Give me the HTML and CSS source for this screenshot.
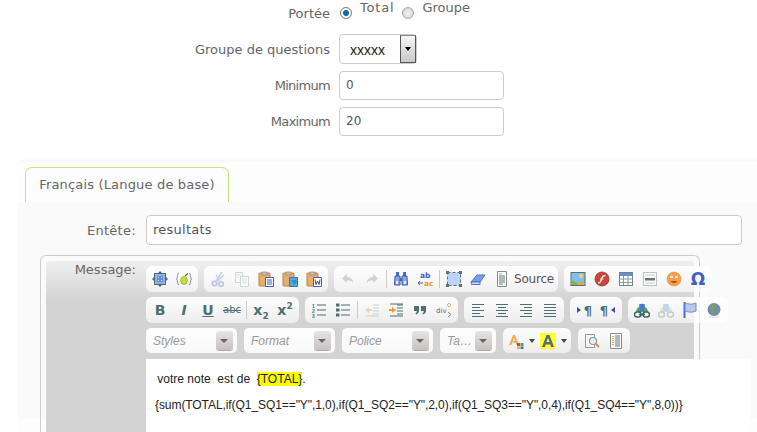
FILE: index.html
```html
<!DOCTYPE html>
<html lang="fr">
<head>
<meta charset="utf-8">
<title>Résultats</title>
<link rel="stylesheet" href="styles.css">
</head>
<body>
<div class="form">
  <div class="row row-radio">
    <label class="lbl">Portée</label>
    <div class="radios">
      <span class="radio on"></span><span class="rtext total">Total</span>
      <span class="radio"></span><span class="rtext">Groupe</span>
    </div>
  </div>
  <div class="row row-select">
    <label class="lbl">Groupe de questions</label>
    <div class="select"><span class="seltext">xxxxx</span><span class="selbtn"></span></div>
  </div>
  <div class="row"><label class="lbl narrow">Minimum</label><div class="input short">0</div></div>
  <div class="row"><label class="lbl narrow">Maximum</label><div class="input short">20</div></div>
</div>

<div class="panel">
  <div class="tabs"><div class="tab">Français (Langue de base)</div></div>
  <div class="body">
    <div class="head-row"><label class="lbl2">Entête:</label><div class="input wide">resultats</div></div>
    <div class="msgbox">
      <div class="msginner">
        <label class="lbl3">Message:</label>
        <div class="editor">
          <div class="tb">
            <div class="g">
              <span class="b"><svg viewBox="0 0 16 16"><path d="M8 0l2 2H6zM8 16l2-2H6zM0 8l2-2v4zM16 8l-2-2v4z" fill="#4f6f6f"/><rect x="2.500" y="2.500" width="11" height="11" fill="#8fb2ea" stroke="#4f6f6f"/><rect x="5" y="5" width="6" height="6" fill="#6a8cd8"/><path d="M6 6h1v1H6zM9 6h1v1H9zM6 9h1v1H6zM9 9h1v1H9z" fill="#cfe0fa"/></svg></span>
              <span class="b"><svg viewBox="0 0 16 16"><path d="M3 2C1 2 2 7 0.500 8 2 9 1 14 3 14M13 2c2 0 1 5 2.500 6-1.500 1-.5 6-2.500 6" fill="none" stroke="#888"/><ellipse cx="8" cy="9.500" rx="3.500" ry="4" fill="#c4dc3c" stroke="#8aa626" stroke-width=".6"/><path d="M9 5l3-2.500" stroke="#5a7a1a" stroke-width="1.200"/></svg></span>
            </div>
            <div class="g">
              <span class="b"><svg viewBox="0 0 16 16"><path d="M12 1L6 10M14 4L7 10" stroke="#c2cce6" stroke-width="1.500" fill="none"/><circle cx="4.500" cy="12.500" r="2.300" fill="none" stroke="#b4c2e6" stroke-width="1.500"/><circle cx="11" cy="13" r="2.300" fill="none" stroke="#b4c2e6" stroke-width="1.500"/><path d="M6 4l4 7" stroke="#d0d4de" stroke-width="1.500"/></svg></span>
              <span class="b"><svg viewBox="0 0 16 16"><path d="M1.500 1.500h7v10h-7z" fill="#f8f8f8" stroke="#cfd4d4"/><path d="M6.500 5.500h8v10h-8z" fill="#fcfcfc" stroke="#cfd4d4"/><path d="M8 8h5M8 10h5M8 12h5M3 4h4M3 6h2" stroke="#dadddd"/></svg></span>
              <span class="b"><svg viewBox="0 0 16 16"><rect x="1" y="2" width="11" height="13" rx="1" fill="#e8ad68" stroke="#b5824a"/><rect x="4" y="1" width="5" height="3" fill="#c9c2b4" stroke="#8d7a5c" stroke-width=".6"/><path d="M7.500 6.500h8v9h-8z" fill="#fff" stroke="#3b5fc4"/><path d="M9 9h5M9 11h5M9 13h5" stroke="#3b5fc4"/></svg></span>
              <span class="b"><svg viewBox="0 0 16 16"><rect x="1" y="2" width="11" height="13" rx="1" fill="#e8ad68" stroke="#b5824a"/><rect x="4" y="1" width="5" height="3" fill="#c9c2b4" stroke="#8d7a5c" stroke-width=".6"/><path d="M7.500 6.500h8v9h-8z" fill="#54a7d8" stroke="#3b76a8"/><path d="M9 9h5l1 3-3 2" fill="#2f8fd0"/></svg></span>
              <span class="b"><svg viewBox="0 0 16 16"><rect x="1" y="2" width="11" height="13" rx="1" fill="#e8ad68" stroke="#b5824a"/><rect x="4" y="1" width="5" height="3" fill="#c9c2b4" stroke="#8d7a5c" stroke-width=".6"/><path d="M7.500 6.500h8v9h-8z" fill="#fff" stroke="#3b5fc4"/><path d="M9 8.500l1 5 1.500-3.500 1.500 3.500 1-5" fill="none" stroke="#3d4d7c"/></svg></span>
            </div>
            <div class="g">
              <span class="b"><svg viewBox="0 0 16 16"><path d="M7 3L2 7.500 7 12V9.500c3 0 5 .5 6 3 .5-4-2-6-6-6.500z" fill="#c9d5d5"/></svg></span>
              <span class="b"><svg viewBox="0 0 16 16"><path d="M9 3l5 4.500L9 12V9.500c-3 0-5 .5-6 3-.5-4 2-6 6-6.500z" fill="#c9d5d5"/></svg></span>
              <span class="sep"></span>
              <span class="b"><svg viewBox="0 0 16 16"><path d="M3 1h3v4H3zM10 1h3v4h-3z" fill="#4668c8"/><path d="M2 5h5v9H1.500zM9 5h5l.5 9H9z" fill="#8ea4e4" stroke="#3d5cb8"/><path d="M7 7h2v3H7z" fill="#4f6f6f"/><path d="M3 10h2v3H3zM11 10h2v3h-2z" fill="#e6edf8"/></svg></span>
              <span class="b"><svg viewBox="0 0 16 16"><text x="3" y="7" class="svgt" fill="#3b5fc4">ab</text><text x="7" y="15" class="svgt" fill="#e59a32">ac</text><path d="M6 12H1l2-2M1 12l2 2" fill="none" stroke="#3b5fc4"/></svg></span>
              <span class="sep"></span>
              <span class="b"><svg viewBox="0 0 16 16"><rect x="1.500" y="1.500" width="13" height="13" fill="#bcd2f6" stroke="#5d7474" stroke-dasharray="3 2"/><path d="M0 0h3v3H0zM13 0h3v3h-3zM0 13h3v3H0zM13 13h3v3h-3z" fill="#5d7474"/></svg></span>
              <span class="b"><svg viewBox="0 0 16 16"><path d="M1 11l6-7h8l-5 7z" fill="#7d9be6" stroke="#5270c4"/><path d="M1 11h9v2.500H1.500z" fill="#cfdcf6" stroke="#5270c4"/></svg></span>
              <span class="b src"><svg viewBox="0 0 16 16"><path d="M3.500 .5h9v15h-9z" fill="#fff" stroke="#7f9090"/><path d="M5 3h3" stroke="#e59a32"/><path d="M5 5h6M5 7h6M5 9h6M5 11h6M5 13h4" stroke="#5d7474"/></svg><span class="srct">Source</span></span>
            </div>
            <div class="g">
              <span class="b"><svg viewBox="0 0 16 16"><rect x="1" y="1.500" width="14" height="13" fill="#7ec2ea" stroke="#5a6f6f"/><path d="M1.500 14V9l4 2 5 3z" fill="#7bb84a"/><path d="M7 14l3-4 4 2v2z" fill="#e9a345"/><circle cx="11" cy="5" r="2" fill="#f6d95a"/></svg></span>
              <span class="b"><svg viewBox="0 0 16 16"><circle cx="8" cy="8" r="7" fill="#c9473a" stroke="#9a3025" stroke-width=".8"/><path d="M4 12c3 0 3-2 4-5 .5-1.500 1.500-2.500 3.500-2.500" fill="none" stroke="#f3e4dc" stroke-width="1.500"/><path d="M6 8h3.500" stroke="#f3e4dc"/></svg></span>
              <span class="b"><svg viewBox="0 0 16 16"><rect x="1.500" y="1.500" width="13" height="13" fill="#fff" stroke="#6f8484"/><path d="M1.500 2h13v3h-13z" fill="#6a8cd8"/><path d="M1.500 8h13M1.500 11.500h13M5.500 5v9M10 5v9" stroke="#8a9c9c"/></svg></span>
              <span class="b"><svg viewBox="0 0 16 16"><rect x="1.500" y="1.500" width="13" height="13" fill="#fff" stroke="#bcc2c2"/><path d="M3 4h10M3 12h10" stroke="#c4c8c8"/><path d="M3 7h10v2.500H3z" fill="#5f7676"/></svg></span>
              <span class="b"><svg viewBox="0 0 16 16"><circle cx="8" cy="8" r="7" fill="#f2a24e" stroke="#e58a30" stroke-width=".6"/><path d="M4 6h3M9 6h3" stroke="#fff" stroke-width="1.300"/><path d="M4.500 10c1.500 2.500 5.500 2.500 7 0z" fill="#c23f2c"/></svg></span>
              <span class="b"><span class="omega">Ω</span></span>
            </div>
          </div>

          <div class="tb">
            <div class="g">
              <span class="b"><span class="tx tb-b">B</span></span>
              <span class="b"><span class="tx tb-i">I</span></span>
              <span class="b"><span class="tx tb-u">U</span></span>
              <span class="b"><span class="tx tb-s">abc</span></span>
              <span class="sep"></span>
              <span class="b"><span class="tx tb-x">x<sub>2</sub></span></span>
              <span class="b"><span class="tx tb-x">x<sup>2</sup></span></span>
            </div>
            <div class="g">
              <span class="b"><svg viewBox="0 0 16 16"><text x="1" y="5.500" class="svgn">1</text><text x="1" y="10.500" class="svgn">2</text><text x="1" y="15.500" class="svgn">3</text><path d="M6 3h9M6 8h9M6 13h9" stroke="#4f6f6f" stroke-width="1.200"/></svg></span>
              <span class="b"><svg viewBox="0 0 16 16"><path d="M1 1.500h3.500v3H1zM1 6.500h3.500v3H1zM1 11.500h3.500v3H1z" fill="#4f6f6f"/><path d="M6 3h9M6 8h9M6 13h9" stroke="#4f6f6f" stroke-width="1.200"/></svg></span>
              <span class="sep"></span>
              <span class="b"><svg viewBox="0 0 16 16"><path d="M1 8l4-3v2h3v2H5v2z" fill="#f3d2a8"/><path d="M9 3h6M9 6h6M9 9h6M9 12h6M2 14h13" stroke="#c9d5d5"/></svg></span>
              <span class="b"><svg viewBox="0 0 16 16"><path d="M8 8L4 5v2H1v2h3v2z" fill="#ef9a34"/><path d="M9 3h6M9 6h6M9 9h6M9 12h6M2 14h13M2 2h13" stroke="#4f6f6f"/></svg></span>
              <span class="b"><svg viewBox="0 0 16 16"><path d="M2 4h5v4.500C7 11 5.500 12 4 12.500L3.500 11c1-.3 1.300-1 1.300-2H2zM9 4h5v4.500c0 2.500-1.500 3.500-3 4l-.5-1.500c1-.3 1.300-1 1.300-2H9z" fill="#4f6f6f"/></svg></span>
              <span class="b"><svg viewBox="0 0 16 16"><text x="0" y="11" class="svgd">div</text><path d="M13 1l2 2-2 2-2-2z" fill="none" stroke="#ef9a34" stroke-width=".8"/><path d="M12 10l3 2.500-3 2.500" fill="none" stroke="#666" stroke-width=".8"/></svg></span>
            </div>
            <div class="g">
              <span class="b"><svg viewBox="0 0 16 16"><path d="M2 2.500h12M2 5.500h8M2 8.500h12M2 11.500h8M2 14.500h12" stroke="#4f6f6f" stroke-width="1.100"/></svg></span>
              <span class="b"><svg viewBox="0 0 16 16"><path d="M2 2.500h12M4 5.500h8M2 8.500h12M4 11.500h8M2 14.500h12" stroke="#4f6f6f" stroke-width="1.100"/></svg></span>
              <span class="b"><svg viewBox="0 0 16 16"><path d="M2 2.500h12M6 5.500h8M2 8.500h12M6 11.500h8M2 14.500h12" stroke="#4f6f6f" stroke-width="1.100"/></svg></span>
              <span class="b"><svg viewBox="0 0 16 16"><path d="M2 2.500h12M2 5.500h12M2 8.500h12M2 11.500h12M2 14.500h12" stroke="#4f6f6f" stroke-width="1.100"/></svg></span>
            </div>
            <div class="g">
              <span class="b"><svg class="mini" viewBox="0 0 8 16"><path d="M1 5l4 3-4 3z" fill="#3f4fa8"/></svg><span class="pil">¶</span></span>
              <span class="b"><span class="pil">¶</span><svg class="mini" viewBox="0 0 8 16"><path d="M7 5L3 8l4 3z" fill="#3f4fa8"/></svg></span>
            </div>
            <div class="g">
              <span class="b"><svg viewBox="0 0 16 16"><path d="M2 10a6 6 0 0 1 12 0z" fill="#46b058"/><path d="M5 2.500a6 6 0 0 1 6 0l-1 7H6z" fill="#4a7ad8"/><rect x="0.500" y="10" width="6.500" height="5" rx="2.400" fill="none" stroke="#44605f" stroke-width="1.500"/><rect x="9" y="10" width="6.500" height="5" rx="2.400" fill="none" stroke="#44605f" stroke-width="1.500"/><path d="M5 12.500h6" stroke="#44605f" stroke-width="1.500"/></svg></span>
              <span class="b"><svg viewBox="0 0 16 16"><path d="M2 10a6 6 0 0 1 12 0z" fill="#cfe4d4"/><path d="M5 2.500a6 6 0 0 1 6 0l-1 7H6z" fill="#c0d2ee"/><rect x="0.500" y="10" width="6" height="5" rx="2.400" fill="none" stroke="#c2cbcb" stroke-width="1.500"/><rect x="9.500" y="10" width="6" height="5" rx="2.400" fill="none" stroke="#c2cbcb" stroke-width="1.500"/></svg></span>
              <span class="b"><svg viewBox="0 0 16 16"><path d="M2.500 0v16" stroke="#4c6cd0" stroke-width="2"/><path d="M3 1c4 1 6 2 11 0v8c-5 2-7 1-11 0z" fill="#b9c8e6" stroke="#6d88d4"/></svg></span>
              <span class="b"><svg viewBox="0 0 16 16"><circle cx="8" cy="7.500" r="6.500" fill="#6d8cb4"/><path d="M4 4l4-2 2 3-2 3 1 3-3 1-1-4zM11 8l2-1-1 4z" fill="#8a9c60"/><path d="M3 15h10" stroke="#d4d4d4"/></svg></span>
            </div>
          </div>

          <div class="tb tb3">
            <div class="combo"><span class="ct">Styles</span><span class="cb"></span></div>
            <div class="combo"><span class="ct">Format</span><span class="cb"></span></div>
            <div class="combo"><span class="ct">Police</span><span class="cb"></span></div>
            <div class="combo small"><span class="ct">Ta…</span><span class="cb"></span></div>
            <div class="g">
              <span class="b c"><svg viewBox="0 0 16 16"><path d="M1 12L5 2h2l4 10H8.500l-.8-2.500H4.300L3.500 12zM4.900 8h2.200L6 4.500z" fill="#f2aa55"/><path d="M9 10h3v3H9z" fill="#d9433a"/><path d="M12.500 10h3v3h-3z" fill="#4aa34d"/><path d="M9 13.500h3V16H9z" fill="#f2b81f"/><path d="M12.500 13.500h3V16h-3z" fill="#3f70d0"/></svg><i class="ar"></i></span>
              <span class="b c"><svg viewBox="0 0 16 16"><rect width="16" height="16" fill="#ffff33"/><path d="M2 14L6.500 2h3L14 14h-3l-.8-2.500H5.800L5 14zM6.500 9h3L8 4.700z" fill="#5a6f6f"/></svg><i class="ar"></i></span>
            </div>
            <div class="g">
              <span class="b"><svg viewBox="0 0 16 16"><path d="M1.500 1.500h9v13h-9z" fill="#f4f4f4" stroke="#8c9a9a"/><circle cx="9" cy="8" r="3.500" fill="#e8f0f6" stroke="#8c9a9a" stroke-width="1.200"/><path d="M11.500 10.500l3.500 3.500" stroke="#e08c2c" stroke-width="1.800"/></svg></span>
              <span class="b"><svg viewBox="0 0 16 16"><path d="M2.500 .5h11v15h-11z" fill="#fff" stroke="#7f9090"/><path d="M5 3v10" stroke="#ef9a34" stroke-width="2" stroke-dasharray="1 1"/><path d="M7 3h5M7 5h5M7 7h5M7 9h5M7 11h5M7 13h5" stroke="#5f7676"/></svg></span>
            </div>
          </div>

          <div class="content">
            <p class="l1">&nbsp;votre note&nbsp; est de&nbsp; <mark class="hl">{TOTAL}</mark>.</p>
            <p class="l2">{sum(TOTAL,if(Q1_SQ1=="Y",1,0),if(Q1_SQ2=="Y",2,0),if(Q1_SQ3=="Y",0,4),if(Q1_SQ4=="Y",8,0))}</p>
          </div>
        </div>
      </div>
    </div>
  </div>
</div>
</body>
</html>
```
FILE: styles.css
```css
html, body { margin: 0; padding: 0; height: 432px; overflow: hidden; background: #fff; }
body { font: 13px "DejaVu Sans", Verdana, sans-serif; color: #666; }

.row { display: flex; align-items: center; gap: 9px; margin-bottom: 7px; height: 29px; }
.row-radio { height: 26px; margin-bottom: 8px; }
.row-select { height: 30px; }
.lbl { width: 330px; text-align: right; flex: none; }
.narrow { letter-spacing: -.7px; }

.radios { display: flex; align-items: flex-start; height: 26px; }
.radio { width: 12px; height: 12px; margin: 7px 8px 0 1px; border-radius: 50%; border: 1px solid #aaa; box-sizing: border-box; background: radial-gradient(circle, #f2f2f2, #cdcdcd); flex: none; }
.radio.on { background: radial-gradient(circle, #0b6aa8 0 2.600px, #fff 3.300px); border-color: #777; }
.rtext { line-height: 16px; margin-right: 7px; }
.total { letter-spacing: .8px; margin-right: 7px; }

.select { width: 78px; height: 30px; box-sizing: border-box; border: 1px solid #ccc; border-radius: 4px; background: #fff; display: flex; justify-content: space-between; }
.seltext { font: 14px "Liberation Sans", Arial, sans-serif; color: #222; line-height: 30px; margin-left: 10px; }
.selbtn { width: 16px; box-sizing: border-box; border: 1px solid #555; border-top-color: #888; background: linear-gradient(#f6f6f6, #c9c9c9); position: relative; }
.selbtn::after { content: ""; position: absolute; left: 4px; top: 11px; border: 3.500px solid transparent; border-top: 4px solid #000; border-bottom: 0; }

.input { box-sizing: border-box; height: 29px; border: 1px solid #ccc; border-radius: 4px; background: #fff; padding-left: 6px; line-height: 27px; color: #555; }
.short { width: 165px; font-family: "DejaVu Sans", sans-serif; font-size: 12px; }
.wide { width: 596px; height: 30px; line-height: 28px; letter-spacing: .25px; }

.panel { margin: 23px 0 0 18px; height: 270px; overflow: hidden; border-radius: 6px 0 0 0; background: #fdfdfd; border-top: 3px solid #f9f9f9; }
.tabs { padding: 5px 0 0 7px; height: 35px; }
.tab { width: 204px; height: 35px; box-sizing: border-box; border: 1px solid #c8e67a; border-bottom: 0; border-radius: 7px 7px 0 0; background: #fdfdfd; text-align: center; line-height: 34px; color: #666; letter-spacing: .17px; }
.body { background: #fafafa; padding: 13px 0 0 22px; height: 217px; box-sizing: border-box; }
.head-row { display: flex; align-items: center; gap: 10px; margin-bottom: 10px; margin-left: -22px; }
.lbl2 { width: 118px; text-align: right; flex: none; letter-spacing: .3px; }

.msgbox { width: 660px; box-sizing: border-box; border: 1px solid #ccc; border-bottom: 0; border-radius: 6px 6px 0 0; padding: 5px 5px 0; height: 200px; }
.msginner { background: linear-gradient(#efefef, #d3d3d3 40px); border-radius: 4px 4px 0 0; height: 190px; display: flex; width: 648px; }
.lbl3 { width: 90px; text-align: right; flex: none; line-height: 17px; }
.editor { flex: none; width: 604px; margin-left: 10px; padding-top: 5px; }

.tb { display: flex; gap: 6px; margin-bottom: 5px; height: 26px; }
.tb3 { gap: 7px; height: 25px; margin-bottom: 6px; }
.g { display: flex; align-items: center; padding: 0 2px; border-radius: 6px; background: linear-gradient(rgba(255,255,255,.95), rgba(255,255,255,.6)); }
.b { width: 24px; height: 26px; flex: none; display: flex; align-items: center; justify-content: center; }
.b svg { width: 16px; height: 16px; flex: none; }
.sep { width: 5px; flex: none; height: 18px; background: linear-gradient(#ccc, #ccc) center / 1px 100% no-repeat; }
.src { width: 66px; justify-content: flex-start; padding-left: 4px; box-sizing: border-box; }
.srct { font: 12px "DejaVu Sans", sans-serif; color: #555; margin-left: 4px; letter-spacing: -.2px; }
.svgt { font: bold 7.500px "DejaVu Sans", sans-serif; }
.svgn { font: bold 5px "Liberation Sans", sans-serif; fill: #4f6f6f; }
.svgd { font: 7px "DejaVu Sans", sans-serif; fill: #666; }

.omega { font: bold 17px "DejaVu Sans", sans-serif; color: #3f5fc8; line-height: 1; }
.tx { color: #4f6f6f; font-family: "DejaVu Sans", sans-serif; line-height: 1; }
.tb-b { font-weight: bold; font-size: 14px; }
.tb-i { font-weight: bold; font-style: italic; font-size: 14px; }
.tb-u { font-weight: bold; font-size: 14px; text-decoration: underline; }
.tb-s { font-size: 10px; text-decoration: line-through; }
.tb-x { font-weight: bold; font-size: 14px; }
.tb-x sub, .tb-x sup { font-size: 9px; line-height: 0; }
.pil { font: bold 13px "DejaVu Sans", sans-serif; color: #4f6f6f; }
.b svg.mini { width: 8px; }

.combo { width: 91px; flex: none; height: 25px; border-radius: 5px; background: linear-gradient(rgba(255,255,255,.95), rgba(255,255,255,.85)); display: flex; align-items: center; justify-content: space-between; padding: 0 4px 0 7px; box-sizing: border-box; }
.combo.small { width: 56px; }
.ct { font: italic 12px "Liberation Sans", sans-serif; color: #999; }
.cb { width: 17px; height: 19px; border-radius: 3px; background: linear-gradient(#e8e4e4, #c6c2c2); position: relative; box-shadow: 0 1px 0 #aaa; }
.cb::after { content: ""; position: absolute; left: 4px; top: 8px; border: 4px solid transparent; border-top: 4px solid #666; border-bottom: 0; }

.c { width: 32px; gap: 2px; }
.ar { border: 3px solid transparent; border-top: 4px solid #444; border-bottom: 0; margin-left: 3px; }

.content { background: #fff; height: 80px; padding-top: 13px; font: 12px "Liberation Sans", Arial, sans-serif; color: #222; }
.content p { margin: 0; line-height: 14px; }
.l1 { padding-left: 8px; margin-bottom: 12px !important; }
.l2 { padding-left: 9px; letter-spacing: -.075px; }
.hl { background: #ff0; color: inherit; }
```
